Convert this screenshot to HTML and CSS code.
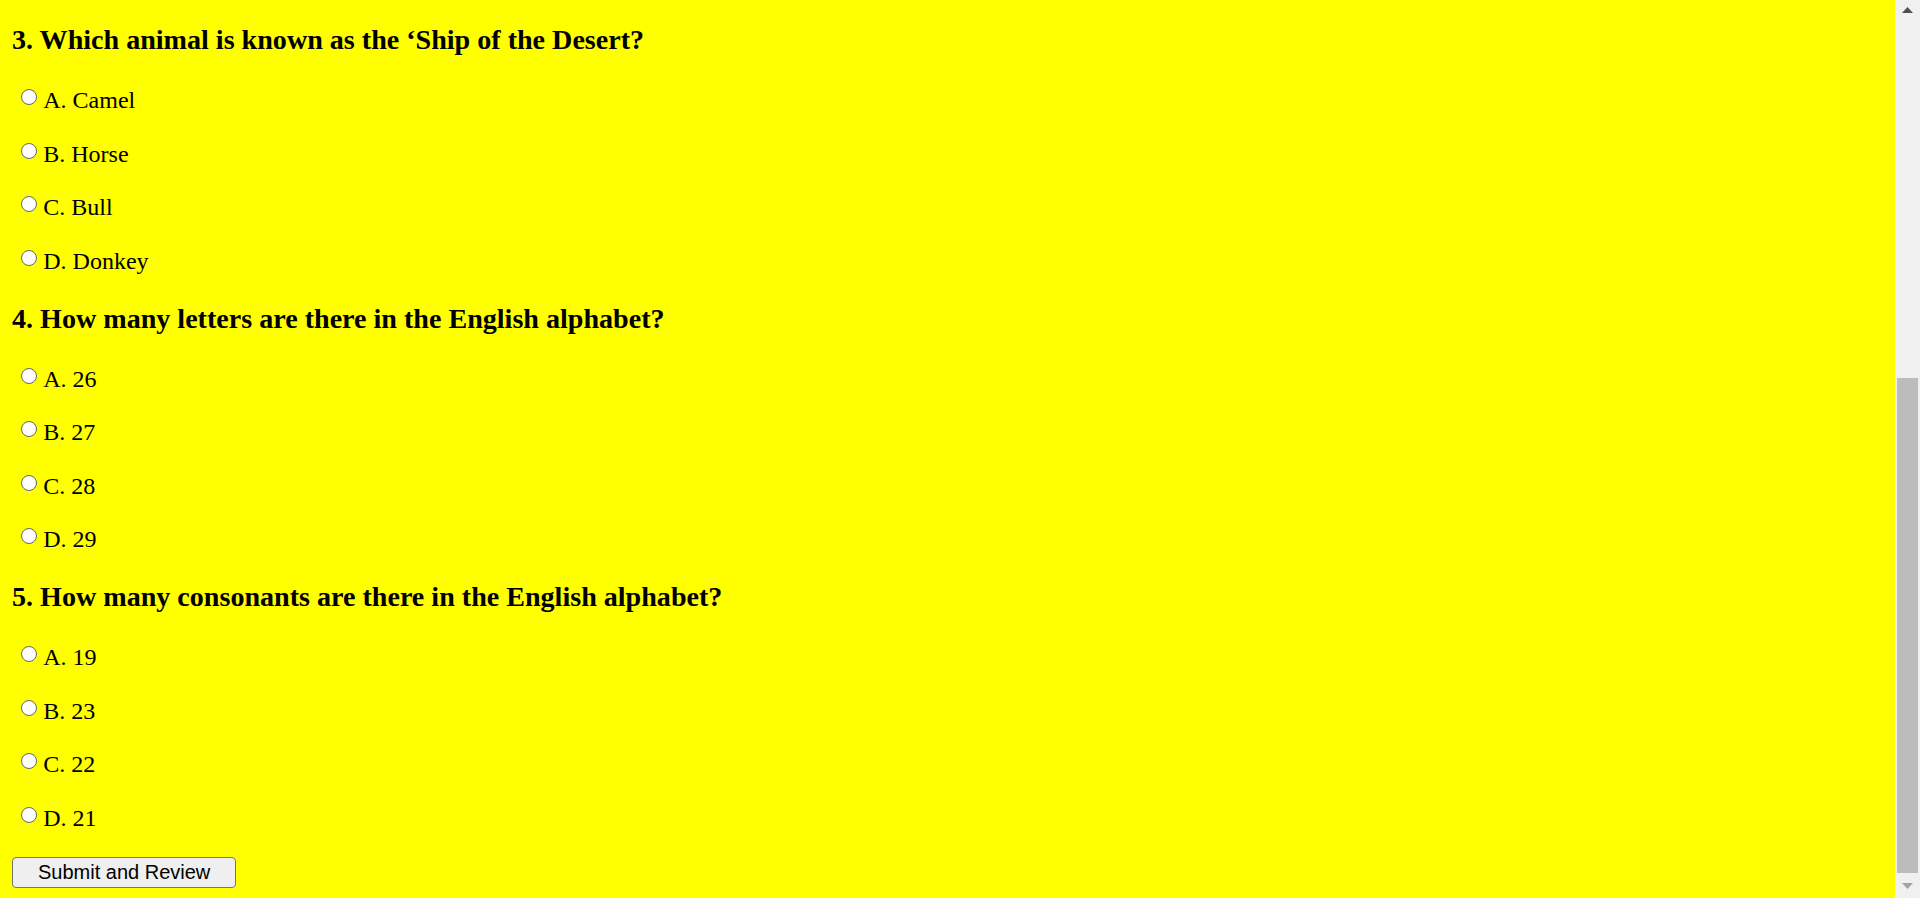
FILE: index.html
```html
<!DOCTYPE html>
<html lang="en">
<head>
<meta charset="utf-8">
<title>Quiz</title>
<link rel="stylesheet" href="styles.css">
</head>
<body>
<div class="window">
  <main class="page">
    <form class="quiz">
      <h3 class="question first">3. Which animal is known as the ‘Ship of the Desert?</h3>
      <p class="option"><input class="radio" type="radio" name="q3" id="q3a"><label for="q3a">A. Camel</label></p>
      <p class="option"><input class="radio" type="radio" name="q3" id="q3b"><label for="q3b">B. Horse</label></p>
      <p class="option"><input class="radio" type="radio" name="q3" id="q3c"><label for="q3c">C. Bull</label></p>
      <p class="option"><input class="radio" type="radio" name="q3" id="q3d"><label for="q3d">D. Donkey</label></p>

      <h3 class="question">4. How many letters are there in the English alphabet?</h3>
      <p class="option"><input class="radio" type="radio" name="q4" id="q4a"><label for="q4a">A. 26</label></p>
      <p class="option"><input class="radio" type="radio" name="q4" id="q4b"><label for="q4b">B. 27</label></p>
      <p class="option"><input class="radio" type="radio" name="q4" id="q4c"><label for="q4c">C. 28</label></p>
      <p class="option"><input class="radio" type="radio" name="q4" id="q4d"><label for="q4d">D. 29</label></p>

      <h3 class="question">5. How many consonants are there in the English alphabet?</h3>
      <p class="option"><input class="radio" type="radio" name="q5" id="q5a"><label for="q5a">A. 19</label></p>
      <p class="option"><input class="radio" type="radio" name="q5" id="q5b"><label for="q5b">B. 23</label></p>
      <p class="option"><input class="radio" type="radio" name="q5" id="q5c"><label for="q5c">C. 22</label></p>
      <p class="option"><input class="radio" type="radio" name="q5" id="q5d"><label for="q5d">D. 21</label></p>

      <div class="actions"><button class="submit" type="button">Submit and Review</button></div>
    </form>
  </main>
  <div class="scrollbar" aria-hidden="true">
    <div class="sb-button sb-up">
      <svg width="11" height="6" viewBox="0 0 11 6"><polygon points="5.5,0 11,6 0,6" fill="#505050"/></svg>
    </div>
    <div class="sb-track">
      <div class="sb-thumb"></div>
    </div>
    <div class="sb-button sb-down">
      <svg width="11" height="6" viewBox="0 0 11 6"><polygon points="0,0 11,0 5.5,6" fill="#a3a3a3"/></svg>
    </div>
  </div>
</div>
</body>
</html>
```

FILE: styles.css
```css
html, body {
  margin: 0;
  height: 100%;
  overflow: hidden;
}

body {
  background: #ffff00;
  color: #000;
  font-family: "Liberation Serif", "Times New Roman", serif;
  font-size: 24px;
}

.window {
  display: flex;
  height: 100vh;
}

.page {
  flex: 1;
  min-width: 0;
  display: flow-root;
  padding: 0 12px;
}

.quiz {
  margin: 0;
}

.question {
  font-size: 28.08px;
  font-weight: bold;
  margin: 28.3px 0;
}

.question.first {
  margin-top: 24px;
}

.option {
  margin: 24px 0;
  padding-top: 3px;
  line-height: 26.5px;
}

.radio {
  appearance: none;
  -webkit-appearance: none;
  box-sizing: border-box;
  width: 16px;
  height: 16px;
  margin: 2px 6.6px 0 8.7px;
  vertical-align: top;
  border: 1.5px solid #666666;
  border-radius: 50%;
  background: #ffffff;
}

.actions {
  margin: 0;
  padding-top: 2px;
}

.submit {
  font-family: "Liberation Sans", Arial, sans-serif;
  font-size: 20px;
  color: #000;
  background: #efefef;
  border: 1px solid #767676;
  border-radius: 4px;
  padding: 3px 25px;
  margin: 0;
}

/* scrollbar */
.scrollbar {
  flex: none;
  width: 25px;
  display: flex;
  flex-direction: column;
  background: #f0f0f0;
}

.sb-button {
  display: flex;
  align-items: center;
  justify-content: center;
}

.sb-up {
  height: 20px;
}

.sb-down {
  height: 25px;
}

.sb-track {
  flex: 1;
  display: flex;
  flex-direction: column;
  justify-content: flex-end;
}

.sb-thumb {
  height: 495px;
  margin: 0 2px;
  background: #bcbcbc;
}
```
